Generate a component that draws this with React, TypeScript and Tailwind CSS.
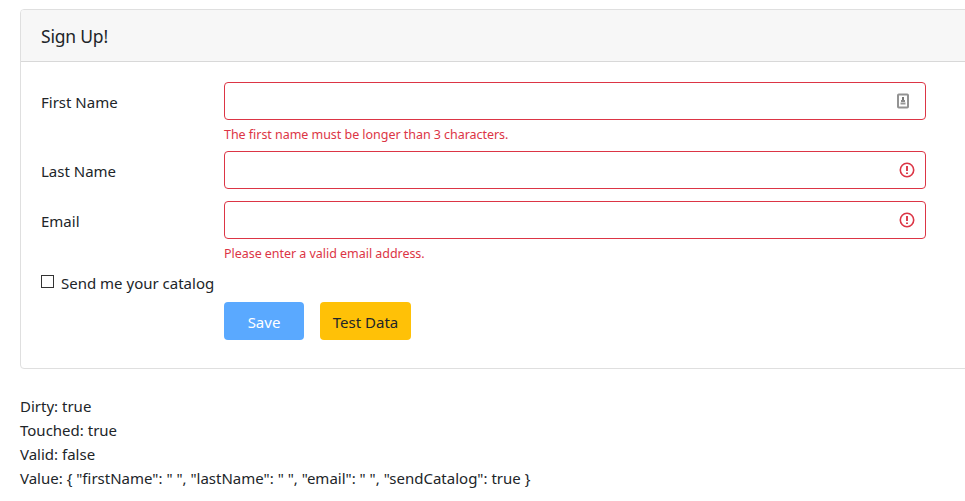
import React from "react";

type Icon = "contact" | "alert";

function FieldIcon({ kind }: { kind: Icon }) {
  if (kind === "contact") {
    return (
      <svg className="mr-[14px]" width="16" height="16" viewBox="0 0 16 16" fill="none">
        <rect x="3" y="1.5" width="10" height="13" rx="0.8" stroke="#939393" strokeWidth="2" />
        <path d="M7 4H9V7H7Z" fill="#777" />
        <path d="M6 7H10V9H6Z" fill="#8a8a8a" />
        <path d="M5.5 9.5H10.5V11.5H5.5Z" fill="#999" />
      </svg>
    );
  }
  return (
    <svg className="mr-[10px]" width="16" height="16" viewBox="0 0 16 16" fill="none" stroke="#dc3545">
      <circle cx="8" cy="8" r="6.7" strokeWidth="1.6" />
      <path d="M8 4V9M8 10.4V12" strokeWidth="1.9" />
    </svg>
  );
}

function Field({ label, icon, error }: { label: string; icon: Icon; error?: string }) {
  return (
    <div className="flex items-start">
      <label className="w-[183px] shrink-0 pt-2 leading-6">{label}</label>
      <div className="w-[702px] shrink-0">
        <div className="flex h-[38px] items-center justify-end rounded border border-[#dc3545] bg-white">
          <FieldIcon kind={icon} />
        </div>
        {error && (
          <p className="mt-1 h-[19px] text-[12.5px] leading-[21px] tracking-[-0.04px] text-[#dc3545]">{error}</p>
        )}
      </div>
    </div>
  );
}

export default function App() {
  return (
    <main className="h-[501px] w-[965px] overflow-hidden bg-white pl-5 pt-[9px] font-['Noto_Sans',sans-serif] text-[15px] text-[#212529]">
      <section className="h-[360px] w-[980px] overflow-hidden rounded border border-[#dfdfdf]">
        <h1 className="h-[52px] border-b border-[#d8d8d8] bg-[#f7f7f7] px-5 pt-[14px] text-[17.5px] leading-[25px] tracking-[-0.2px]">
          Sign Up!
        </h1>
        <form className="px-5 pt-5">
          <Field label="First Name" icon="contact" error="The first name must be longer than 3 characters." />
          <div className="mt-2">
            <Field label="Last Name" icon="alert" />
          </div>
          <div className="mt-3">
            <Field label="Email" icon="alert" error="Please enter a valid email address." />
          </div>
          <label className="mt-[9px] flex h-6 items-start gap-[7px]">
            <span className="mt-1 h-[13px] w-[13px] border border-[#333]" />
            <span className="leading-6">Send me your catalog</span>
          </label>
          <div className="ml-[183px] mt-[7px] flex gap-4">
            <button type="button" className="h-[38px] w-20 rounded bg-[#5aa9ff] pt-0.5 text-white">
              Save
            </button>
            <button type="button" className="h-[38px] w-[91px] rounded bg-[#ffc107] pt-0.5">
              Test Data
            </button>
          </div>
        </form>
      </section>
      <section className="mt-[25px] leading-6">
        <p>Dirty: true</p>
        <p>Touched: true</p>
        <p>Valid: false</p>
        <p>Value: {'{ "firstName": " ", "lastName": " ", "email": " ", "sendCatalog": true }'}</p>
      </section>
    </main>
  );
}
